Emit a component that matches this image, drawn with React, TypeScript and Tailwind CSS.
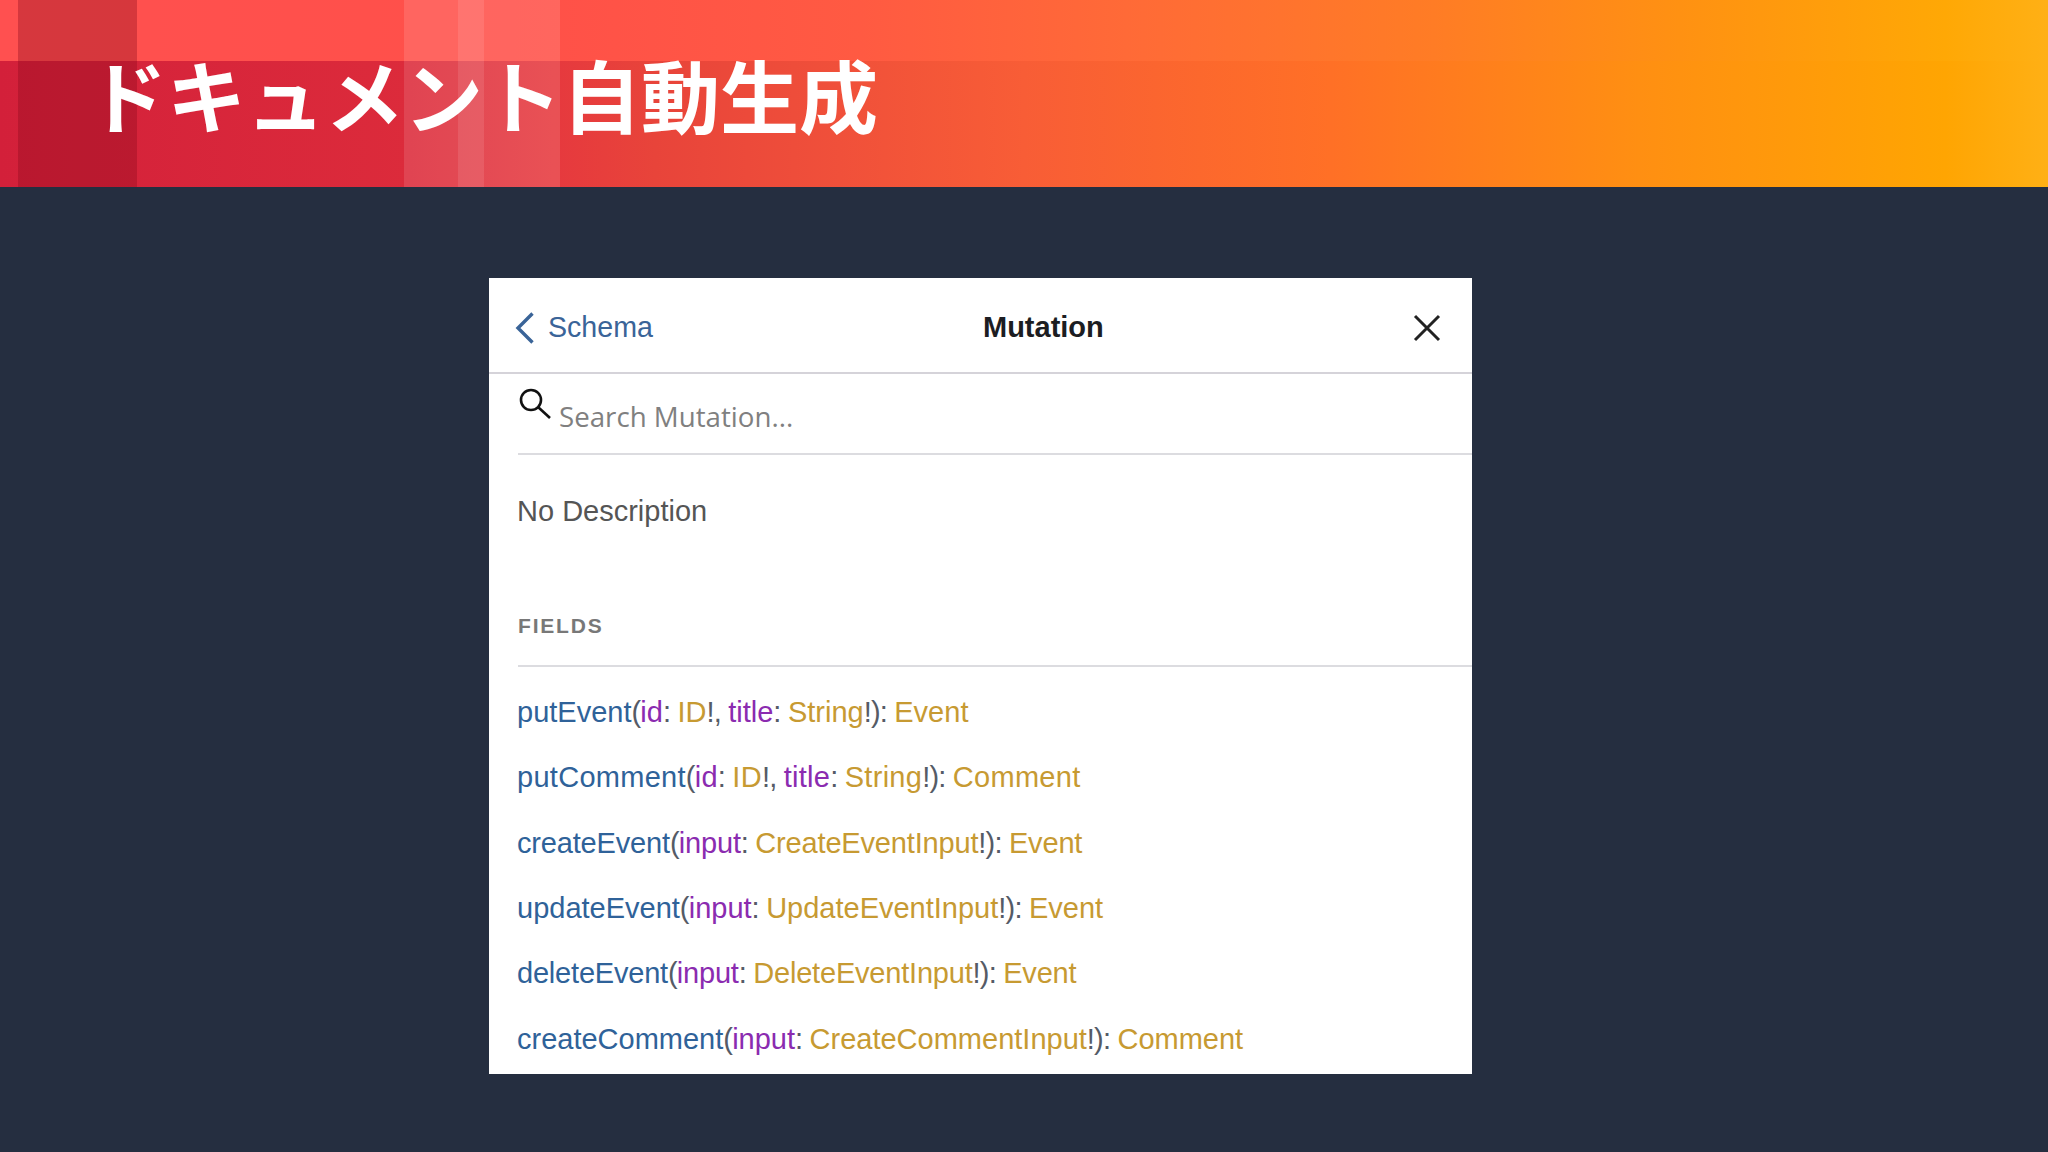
import React from 'react';

type Part = { t: string; c: 'name' | 'arg' | 'type' | 'punct' };

const colors = {
    name: 'text-[#2f6299]',
    arg: 'text-[#8b2bb0]',
    type: 'text-[#c79a32]',
    punct: 'text-[#555b66] tracking-[-0.8px]',
};

const field = (name: string, args: [string, string][], ret: string): Part[] => {
    const parts: Part[] = [{ t: name, c: 'name' }, { t: '(', c: 'punct' }];
    args.forEach(([a, ty], i) => {
        parts.push({ t: a, c: 'arg' }, { t: ': ', c: 'punct' }, { t: ty, c: 'type' }, { t: i < args.length - 1 ? '!, ' : '!', c: 'punct' });
    });
    parts.push({ t: '): ', c: 'punct' }, { t: ret, c: 'type' });
    return parts;
};

const fields: { parts: Part[]; track: string }[] = [
    { parts: field('putEvent', [['id', 'ID'], ['title', 'String']], 'Event'), track: '' },
    { parts: field('putComment', [['id', 'ID'], ['title', 'String']], 'Comment'), track: 'tracking-[0.28px]' },
    { parts: field('createEvent', [['input', 'CreateEventInput']], 'Event'), track: 'tracking-[-0.17px]' },
    { parts: field('updateEvent', [['input', 'UpdateEventInput']], 'Event'), track: '' },
    { parts: field('deleteEvent', [['input', 'DeleteEventInput']], 'Event'), track: 'tracking-[-0.2px]' },
    { parts: field('createComment', [['input', 'CreateCommentInput']], 'Comment'), track: '' },
];

const Banner: React.FC = () => (
    <div className="relative h-[187px] overflow-hidden bg-[linear-gradient(90deg,#d3203a_0%,#dc2b3b_20%,#e6393e_27%,#e8443a_32%,#f0503a_41%,#f85d36_50%,#ff7026_65%,#ff8f12_80%,#ffa502_95%,#ffb015_100%)]">
        <div className="absolute inset-x-0 top-0 h-[61px] bg-[linear-gradient(90deg,#ff5050_0%,#ff5049_25%,#ff5a42_42%,#ff6a37_55%,#ff7c25_70%,#ff9112_82%,#ffa805_95%,#ffb015_100%)]" />
        <div className="absolute inset-y-0 left-[18px] w-[119px] bg-[#8a0a1c]/35" />
        <div className="absolute inset-y-0 left-[404px] w-[156px] bg-white/12" />
        <div className="absolute inset-y-0 left-[458px] w-[26px] bg-white/10" />
        <h1 className="relative pl-[88px] pt-[50px] text-[79px] leading-[88px] font-bold text-white font-['Noto_Sans_CJK_JP',sans-serif]">ドキュメント自動生成</h1>
    </div>
);

const Panel: React.FC = () => (
    <div className="ml-[489px] mt-[91px] flex h-[796px] w-[983px] flex-col bg-white font-['Liberation_Sans',sans-serif]">
        <div className="flex h-[96px] shrink-0 items-center border-b-2 border-[#d5d3d9] pl-[26px] pr-[31px] pt-[5px]">
            <div className="flex w-[468px] items-center">
                <svg width="20" height="32" viewBox="0 0 20 32" fill="none" stroke="#3a6498" strokeWidth="3.4">
                    <path d="M17.5 1.5 L3 16 L17.5 30.5" />
                </svg>
                <span className="ml-[13px] text-[28.6px] leading-none text-[#3a6498]">Schema</span>
            </div>
            <span className="text-[29px] leading-none font-bold text-[#1c1d22]">Mutation</span>
            <svg className="ml-auto" width="28" height="28" viewBox="0 0 28 28" fill="none" stroke="#222" strokeWidth="3">
                <path d="M2 2 L26 26 M26 2 L2 26" />
            </svg>
        </div>
        <div className="ml-[29px] flex h-[81px] shrink-0 border-b-2 border-[#dcdce0]">
            <svg className="ml-[1px] mt-[14px]" width="32" height="32" viewBox="0 0 32 32" fill="none" stroke="#111" strokeWidth="2.6">
                <circle cx="12" cy="12" r="10" />
                <path d="M19 19 L31 30" />
            </svg>
            <span className="ml-[8px] mt-[22px] text-[27.7px] leading-[40px] text-[#808080] font-['Open_Sans',sans-serif]">Search Mutation...</span>
        </div>
        <p className="ml-[28px] mt-[38px] text-[29px] leading-[36px] text-[#555]">No Description</p>
        <div className="ml-[29px] mt-[85px] shrink-0 border-b-2 border-[#dcdce0] pb-[27px]">
            <h2 className="text-[21px] leading-[24px] font-bold tracking-[1.8px] text-[#787878]">FIELDS</h2>
        </div>
        <ul className="ml-[28px] mt-[13px]">
            {fields.map((row, i) => (
                <li key={i} className={`h-[65.33px] text-[29px] leading-[65.33px] whitespace-pre ${row.track}`}>
                    {row.parts.map((p, j) => (
                        <span key={j} className={colors[p.c]}>{p.t}</span>
                    ))}
                </li>
            ))}
        </ul>
    </div>
);

export default function App() {
    return (
        <div className="h-[1152px] w-[2048px] overflow-hidden bg-[#252e40]">
            <Banner />
            <Panel />
        </div>
    );
}
